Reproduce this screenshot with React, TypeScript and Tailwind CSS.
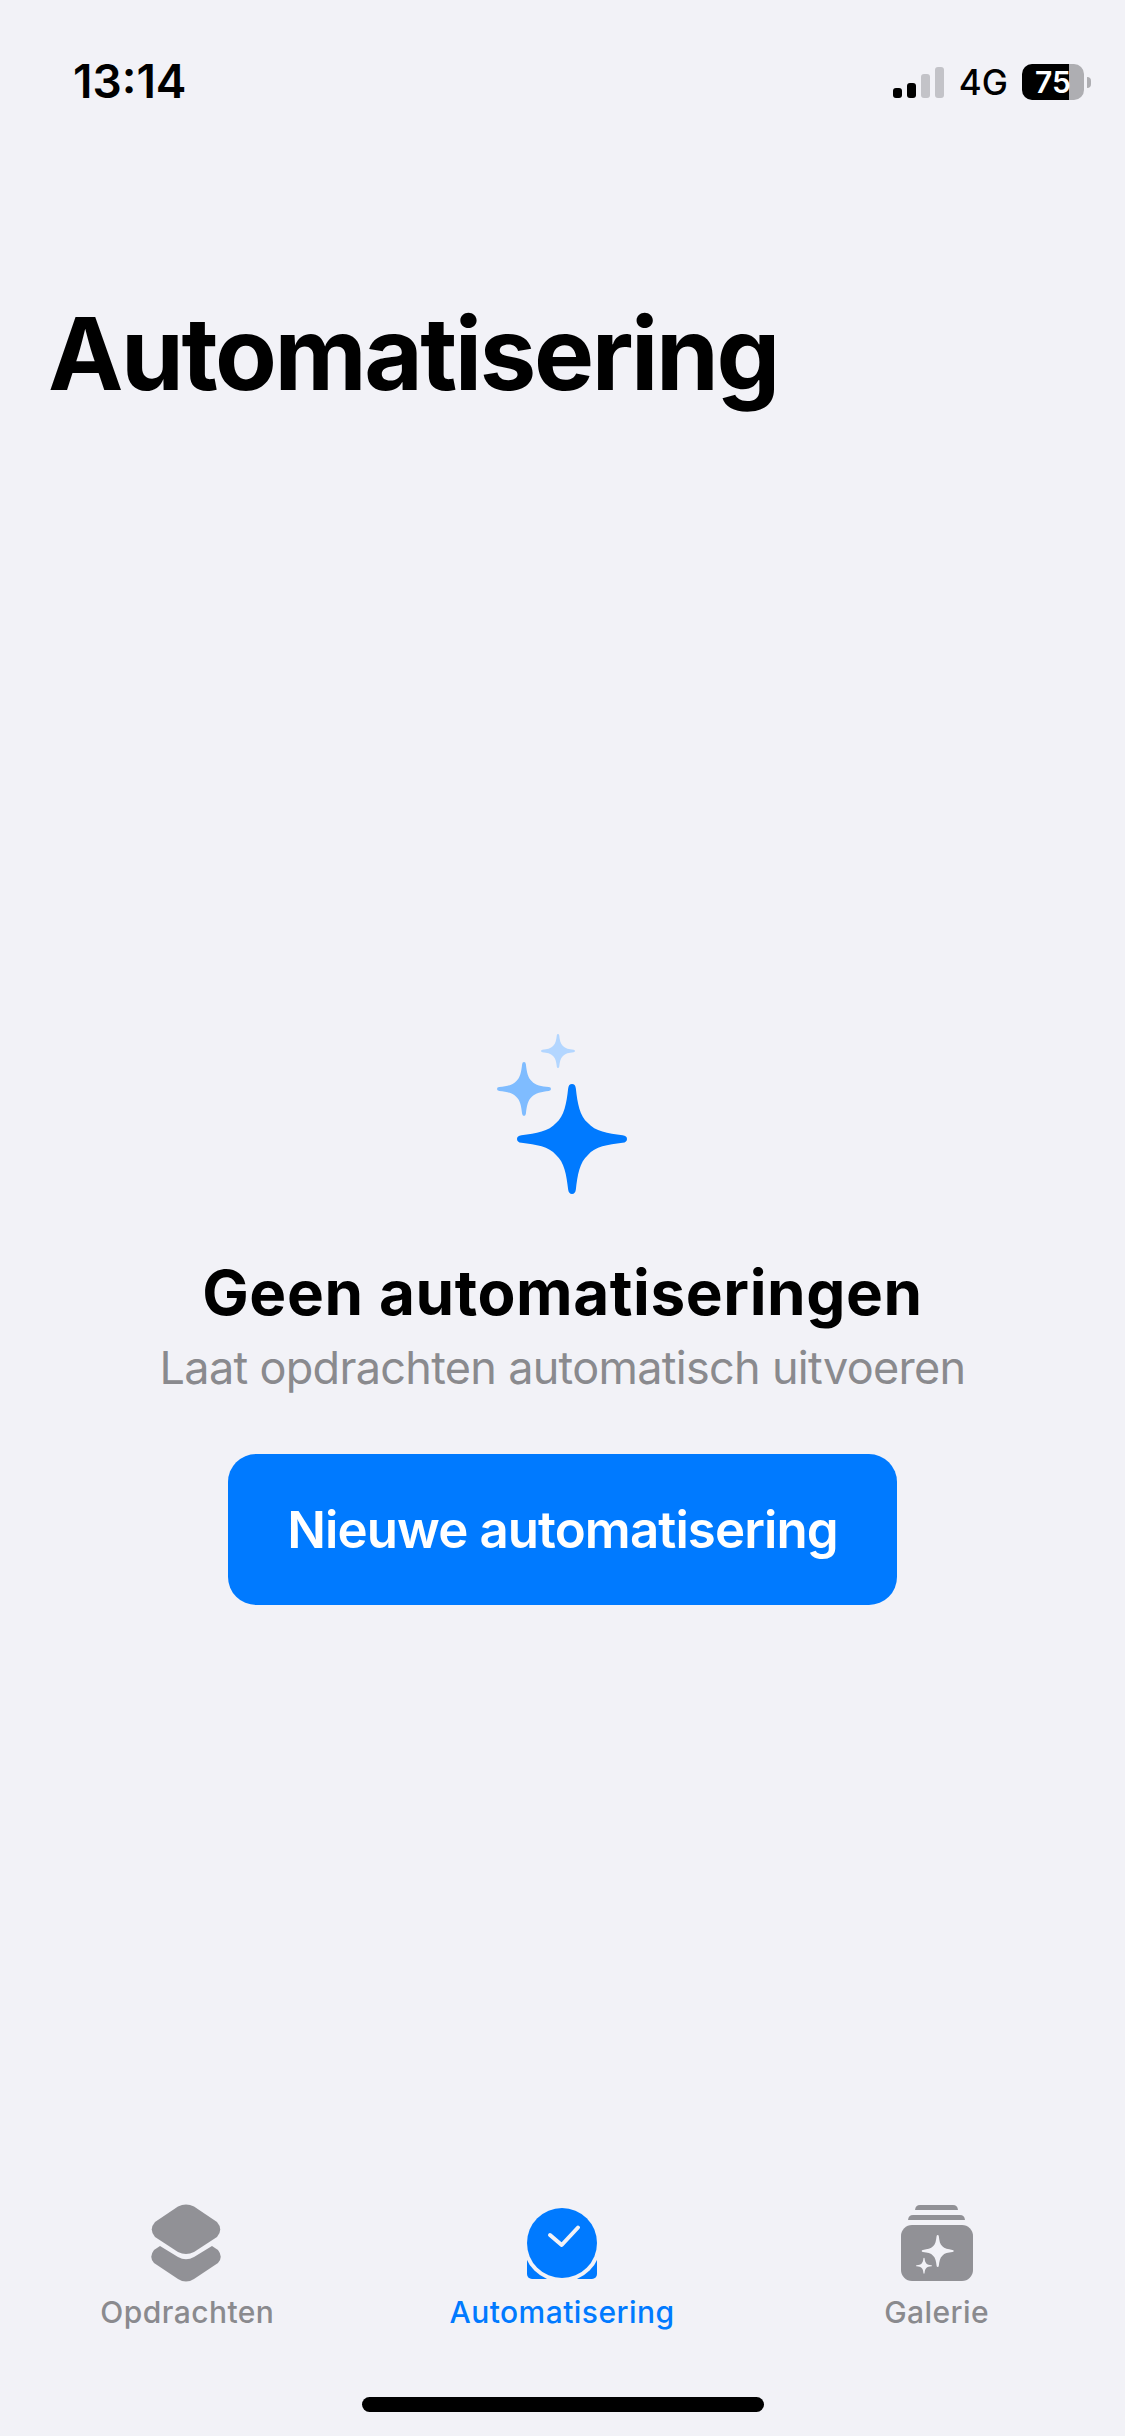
const STAR =
  "M-7 -92 Q-6 -100 0 -100 Q6 -100 7 -92 C10 -65 14 -42 29 -29 C42 -14 65 -10 92 -7 Q100 -6 100 0 Q100 6 92 7 C65 10 42 14 29 29 C14 42 10 65 7 92 Q6 100 0 100 Q-6 100 -7 92 C-10 65 -14 42 -29 29 C-42 14 -65 10 -92 7 Q-100 6 -100 0 Q-100 -6 -92 -7 C-65 -10 -42 -14 -29 -29 C-14 -42 -10 -65 -7 -92 Z";

const Sparkles = () => (
  <svg width="180" height="200" viewBox="0 0 180 200" className="-ml-[5px] shrink-0">
    <path d={STAR} fill="#b3d6ff" transform="translate(88 40) scale(0.17)" />
    <path d={STAR} fill="#7fbcff" transform="translate(54 78) scale(0.27)" />
    <path d={STAR} fill="#007aff" transform="translate(102 128) scale(0.55)" />
  </svg>
);

const LayersIcon = () => (
  <svg width="72" height="80" viewBox="0 0 72 80" fill="#919196">
    <path d="M27 2.5 Q35 -1.5 43 2.5 L66 18 Q72.5 25.5 66 33 L43 48 Q35 52 27 48 L4 33 Q-2.5 25.5 4 18 Z" />
    <path d="M9 42 L27 53 Q35 57.5 43 53 L61 42 L67 46 Q72.5 53 67 59 L43 75 Q35 80 27 75 L3 59 Q-2.5 53 3 46 Z" />
  </svg>
);

const AutomationIcon = () => (
  <svg width="80" height="80" viewBox="0 0 80 80">
    <rect x="5" y="48" width="70" height="27" rx="5" fill="#007aff" />
    <circle cx="40" cy="39" r="39" fill="#f2f2f7" />
    <circle cx="40" cy="39" r="35" fill="#007aff" />
    <path d="M28 31 L39.7 41 L56 23.5" fill="none" stroke="#f2f2f7" strokeWidth="4" strokeLinecap="round" strokeLinejoin="round" />
  </svg>
);

const GalleryIcon = () => (
  <svg width="72" height="80" viewBox="0 0 72 80" fill="#919196">
    <path d="M14 6 Q14.5 1 19 1 L52 1 Q56.5 1 57 6 Z" />
    <path d="M7 16 Q7.5 11 12 11 L59 11 Q63.5 11 64 16 Z" />
    <rect x="0" y="21" width="72" height="56" rx="11" />
    <path d={STAR} fill="#f2f2f7" transform="translate(36.7 47) scale(0.16)" />
    <path d={STAR} fill="#f2f2f7" transform="translate(23 61.7) scale(0.08)" />
  </svg>
);

const tabs = [
  { label: "Opdrachten", icon: <LayersIcon />, color: "text-[#8a8a8e]" },
  { label: "Automatisering", icon: <AutomationIcon />, color: "text-[#007aff]" },
  { label: "Galerie", icon: <GalleryIcon />, color: "text-[#8a8a8e]" },
];

const StatusBar = () => (
  <div className="flex h-[160px] items-start justify-between pl-[73px] pr-[34px] pt-[56px]">
    <span className="text-[46px] leading-[50px] font-semibold text-black">13:14</span>
    <div className="flex items-center pt-[8px]">
      <div className="flex items-end gap-[5px]">
        <div className="h-[10px] w-[9px] rounded-[3px] bg-black" />
        <div className="h-[15px] w-[9px] rounded-[3px] bg-black" />
        <div className="h-[24px] w-[9px] rounded-[3px] bg-[#c3c3c8]" />
        <div className="h-[31px] w-[9px] rounded-[3px] bg-[#c3c3c8]" />
      </div>
      <span className="ml-[15px] text-[35px] leading-[36px] font-medium text-black">4G</span>
      <div className="relative ml-[14px] flex h-[36px] w-[62px]">
        <div className="w-[47px] rounded-l-[10px] bg-black" />
        <div className="flex-1 rounded-r-[10px] bg-[#aeaeb2]" />
        <span className="absolute inset-0 text-center text-[30px] leading-[36px] font-semibold text-white">75</span>
      </div>
      <div className="ml-[3px] h-[11px] w-[4px] rounded-r-full bg-[#aeaeb2]" />
    </div>
  </div>
);

export default function App() {
  return (
    <div className="flex h-[2436px] w-full flex-col bg-[#f2f2f7] font-['Inter',sans-serif]">
      <StatusBar />
      <h1 className="pl-[48px] pt-[128px] text-[101px] leading-[130px] font-bold tracking-[-2.45px] text-black">
        Automatisering
      </h1>
      <main className="flex flex-1 flex-col items-center pt-[593px]">
        <Sparkles />
        <h2 className="mt-[44px] text-[62px] leading-[76px] font-bold tracking-[0.6px] text-black">Geen automatiseringen</h2>
        <p className="mt-[10px] text-[45px] leading-[54px] font-normal tracking-[-0.7px] text-[#8a8a8e]">
          Laat opdrachten automatisch uitvoeren
        </p>
        <button className="mt-[59px] flex h-[151px] w-[669px] items-center justify-center rounded-[28px] bg-[#007aff] pt-[2px] text-[51px] font-semibold tracking-[-0.9px] text-white">
          Nieuwe automatisering
        </button>
      </main>
      <nav className="grid grid-cols-3 pr-[1px]">
        {tabs.map((tab) => (
          <div key={tab.label} className="flex flex-col items-center">
            {tab.icon}
            <span className={`mt-[8px] text-[30px] leading-[40px] font-medium tracking-[0.45px] ${tab.color}`}>{tab.label}</span>
          </div>
        ))}
      </nav>
      <div className="flex justify-center pb-[24px] pt-[65px]">
        <div className="h-[15px] w-[402px] rounded-full bg-black" />
      </div>
    </div>
  );
}
